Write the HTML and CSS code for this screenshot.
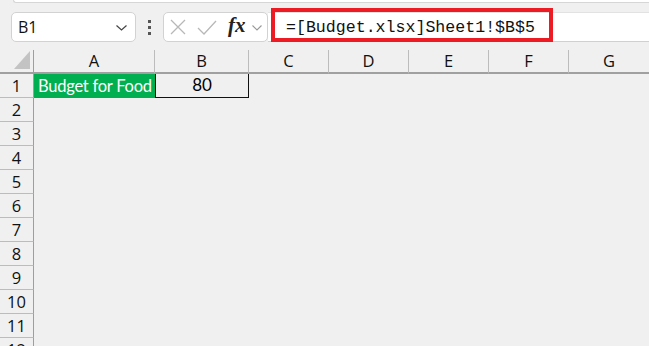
FILE: index.html
```html
<!DOCTYPE html>
<html>
<head>
<meta charset="utf-8">
<link rel="stylesheet" href="styles.css">
</head>
<body>
<div class="top"></div>
<div class="toolbar">
  <div class="namebox"><span class="nb-text">B1</span>
    <svg class="chev" width="11" height="6" viewBox="0 0 11 6"><path d="M0.5 0.5 L5.5 5 L10.5 0.5" fill="none" stroke="#444" stroke-width="1.2"/></svg>
  </div>
  <div class="dots"><i></i><i></i><i></i></div>
  <div class="fnbox">
    <svg class="ic-x" width="16" height="16" viewBox="0 0 16 16"><path d="M1 1 L15 15 M15 1 L1 15" stroke="#b8b8b8" stroke-width="1.3" fill="none"/></svg>
    <svg class="ic-check" width="20" height="15" viewBox="0 0 20 15"><path d="M1 8 L7 14 L19 1" stroke="#b8b8b8" stroke-width="1.3" fill="none"/></svg>
    <span class="fx">fx</span>
    <svg class="chev2" width="10" height="6" viewBox="0 0 10 6"><path d="M0.5 0.5 L5 5 L9.5 0.5" fill="none" stroke="#999" stroke-width="1.1"/></svg>
  </div>
  <div class="formula">
    <span class="ftext">=[Budget.xlsx]Sheet1!$B$5</span>
    <div class="redbox"></div>
  </div>
</div>
<div class="sheet">
  <div class="row head">
    <div class="rn corner"><svg width="16" height="18" viewBox="0 0 16 18"><path d="M16 0 L16 18 L0 18 Z" fill="#c3c3c3"/></svg></div>
    <div class="ch ca">A</div><div class="ch cb">B</div><div class="ch">C</div><div class="ch">D</div><div class="ch">E</div><div class="ch">F</div><div class="ch">G</div>
  </div>
  <div class="row">
    <div class="rn">1</div>
    <div class="cell ca green">Budget for Food</div>
    <div class="cell cb sel">80</div>
  </div>
  <div class="row"><div class="rn">2</div></div>
  <div class="row"><div class="rn">3</div></div>
  <div class="row"><div class="rn">4</div></div>
  <div class="row"><div class="rn">5</div></div>
  <div class="row"><div class="rn">6</div></div>
  <div class="row"><div class="rn">7</div></div>
  <div class="row"><div class="rn">8</div></div>
  <div class="row"><div class="rn">9</div></div>
  <div class="row"><div class="rn">10</div></div>
  <div class="row"><div class="rn">11</div></div>
  <div class="row"><div class="rn">12</div></div>
</div>
</body>
</html>
```
FILE: styles.css
```css
html, body { margin: 0; padding: 0; }
body {
  width: 649px; height: 346px; overflow: hidden;
  background: #f0f0f0;
  font-family: "Open Sans", "Noto Sans", sans-serif;
  color: #000;
}
.top {
  height: 2px; margin-left: 13px;
  background: #fff;
  border-bottom: 1px solid #d6d6d6;
  border-left: 1px solid #d6d6d6;
  border-bottom-left-radius: 4px;
}
.toolbar {
  display: flex; align-items: stretch;
  margin-top: 9px; height: 30px;
}
.namebox {
  margin-left: 11px;
  background: #fff; border: 1px solid #d2d2d2; border-radius: 5px;
  display: flex; align-items: center; justify-content: space-between;
  padding: 0 8px 0 6px; box-sizing: border-box; width: 125px;
}
.nb-text { font-size: 16px; color: #111; }
.chev { margin-top: 2px; }
.dots {
  width: 27px; display: flex; flex-direction: column; align-items: center; justify-content: center; gap: 3px;
}
.dots i { display: block; width: 3px; height: 3px; background: #555; }
.fnbox {
  width: 105px; box-sizing: border-box;
  background: #fff; border: 1px solid #d2d2d2; border-radius: 5px;
  display: flex; align-items: center; padding-left: 6px;
}
.ic-x { margin-right: 11px; }
.ic-check { margin-right: 11px; }
.fx {
  font-family: "Liberation Serif", serif; font-style: italic; font-weight: bold;
  font-size: 21px; color: #222; margin-top: -4px;
}
.chev2 { margin-left: 6px; margin-top: 2px; }
.formula {
  flex: 1; position: relative;
  background: #fff; border-bottom: 1px solid #d0d0d0; border-top: 1px solid #e2e2e2;
  display: flex; align-items: center;
}
.ftext {
  font-family: "Liberation Mono", "DejaVu Sans Mono", monospace;
  font-size: 16.6px; color: #111; margin-left: 18px; margin-top: 1px;
}
.redbox {
  position: absolute; left: 3px; top: -5px;
  width: 282px; height: 34px; box-sizing: border-box;
  border: 4px solid #ed1c24;
}
.sheet { margin-top: 8px; }
.row { display: flex; height: 24px; }
.rn {
  width: 34px; box-sizing: border-box; flex: none;
  background: #f0f0f0;
  border-right: 1px solid #9e9e9e; border-bottom: 1px solid #bcbcbc;
  font-size: 16.5px; line-height: 23px; text-align: center; color: #111;
}
.corner { display: flex; align-items: flex-end; justify-content: flex-end; padding: 0 3px 3px 0; border-bottom: 2px solid #a0a0a0; }
.ch {
  width: 80px; flex: none; box-sizing: border-box;
  border-right: 1px solid #bcbcbc; border-bottom: 2px solid #a0a0a0;
  font-size: 16.5px; line-height: 22px; text-align: center; color: #111;
}
.ca { width: 121px; }
.cb { width: 94px; }
.head .ch:last-child { border-right: none; }
.cell {
  flex: none; box-sizing: border-box; height: 24px;
  font-family: "Lato", "Open Sans", sans-serif;
  font-size: 16.5px; line-height: 24px;
}
.green { background: #00b050; color: #fff; padding-left: 4px; white-space: nowrap; letter-spacing: -0.25px; }
.sel { border: 1px solid #111; border-top: none; text-align: center; line-height: 22px; font-size: 17px; }
```
